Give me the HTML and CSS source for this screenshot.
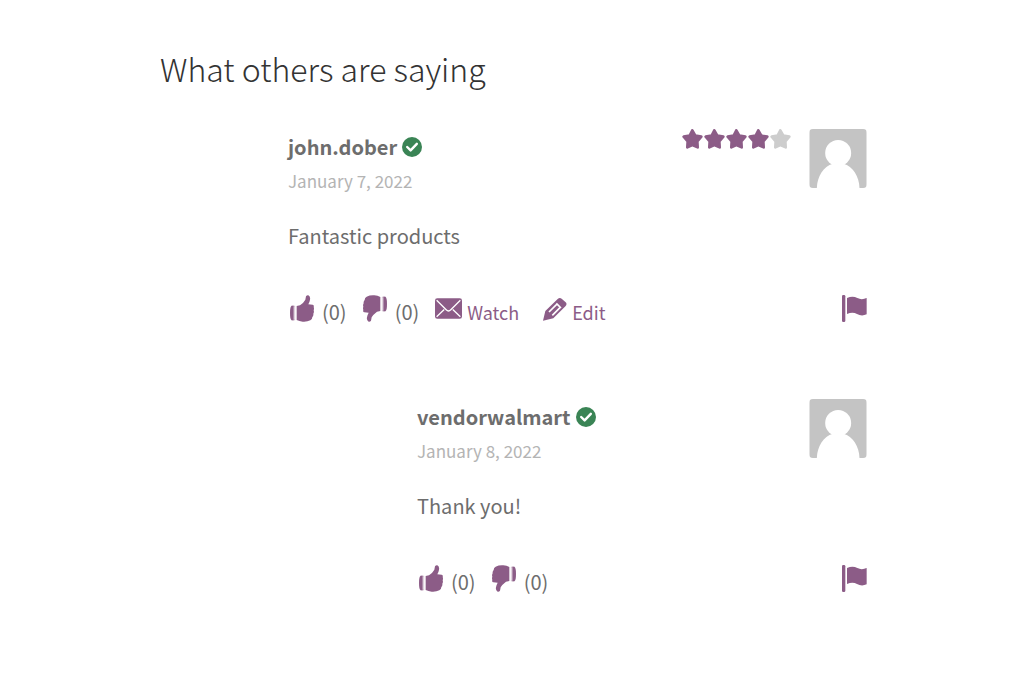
FILE: index.html
```
<!DOCTYPE html>
<html lang="en">
<head>
<meta charset="utf-8">
<meta name="viewport" content="width=device-width, initial-scale=1">
<title>What others are saying</title>
<link rel="stylesheet" href="styles.css">
</head>
<body>
<svg class="sprite" aria-hidden="true">
  <symbol id="thumb" viewBox="0 0 72 81">
    <path d="M5 32H11V76H5Q0 74 0 54T5 32Z"/>
    <path class="line" d="M5 33H14V75H5"/>
    <path d="M20 33L30 31Q42 22 46 14L48 4Q51 0 55 1Q62 5 60 14Q59 21 55 28L68 29Q73 30 71 36Q73 41 71 46Q73 51 70 56Q71 62 67 66Q67 73 61 76Q51 81 38 80Q28 79 20 75Z"/>
  </symbol>
  <symbol id="mail" viewBox="0 0 82 62">
    <rect width="82" height="62" rx="7"/>
    <path class="cut" d="M5 6L34 35Q41 42 48 35L77 6M5 56L28 34M77 56L54 34"/>
  </symbol>
  <symbol id="pencil" viewBox="0 0 72 70">
    <path d="M0 70L7 41L44 5Q50-1 56 4L68 15Q73 20 68 26L31 63Z"/>
    <path class="bars" d="M18 44L41 21M28 54L51 31M40 18L54 32"/>
  </symbol>
  <symbol id="flag" viewBox="0 0 75 81">
    <rect width="10" height="81" rx="4"/>
    <path d="M15 9Q32 1 46 9Q59 16 74 9V58Q59 65 45 57Q32 50 15 57Z"/>
  </symbol>
  <symbol id="star" viewBox="0 0 63 60">
    <path class="body" d="M31 4L40 20L58 23L46 37L47 55L31 48L16 55L17 37L5 23L23 20Z"/>
  </symbol>
  <symbol id="check" viewBox="0 0 58 58">
    <circle cx="29" cy="29" r="29"/>
    <path class="tick" d="M15 29L25 39L43 20"/>
  </symbol>
  <symbol id="person" viewBox="0 0 171 177">
    <rect width="171" height="177" fill="#c4c4c4"/>
    <circle cx="86" cy="72" r="39" fill="#fff"/>
    <path fill="#fff" d="M22 177C23 142 42 112 70 104H102C130 112 149 142 150 177Z"/>
  </symbol>
</svg>
<main class="reviews">
  <h2 class="title">What others are saying</h2>
  <article class="comment">
    <div class="content">
      <h3 class="author">john.dober <svg class="verified" role="img" aria-label="Verified"><use href="#check"/></svg></h3>
      <time class="date" datetime="2022-01-07">January 7, 2022</time>
      <p class="text">Fantastic products</p>
    </div>
    <div class="rating" role="img" aria-label="4 out of 5">
      <svg class="star"><use href="#star"/></svg><svg class="star"><use href="#star"/></svg><svg class="star"><use href="#star"/></svg><svg class="star"><use href="#star"/></svg><svg class="star empty"><use href="#star"/></svg>
    </div>
    <svg class="avatar" role="img" aria-label="john.dober"><use href="#person"/></svg>
    <div class="actions">
      <button class="vote" type="button" aria-label="Like"><svg class="thumb"><use href="#thumb"/></svg><span class="label">(0)</span></button>
      <button class="vote" type="button" aria-label="Dislike"><svg class="thumb down"><use href="#thumb"/></svg><span class="label">(0)</span></button>
      <a class="link" href="#"><svg class="mail"><use href="#mail"/></svg><span class="label">Watch</span></a>
      <a class="link edit" href="#"><svg class="pencil"><use href="#pencil"/></svg><span class="label">Edit</span></a>
      <button class="report" type="button" aria-label="Report"><svg class="flag"><use href="#flag"/></svg></button>
    </div>
  </article>
  <article class="comment reply">
    <div class="content">
      <h3 class="author">vendorwalmart <svg class="verified" role="img" aria-label="Verified"><use href="#check"/></svg></h3>
      <time class="date" datetime="2022-01-08">January 8, 2022</time>
      <p class="text">Thank you!</p>
    </div>
    <svg class="avatar" role="img" aria-label="vendorwalmart"><use href="#person"/></svg>
    <div class="actions">
      <button class="vote" type="button" aria-label="Like"><svg class="thumb"><use href="#thumb"/></svg><span class="label">(0)</span></button>
      <button class="vote" type="button" aria-label="Dislike"><svg class="thumb down"><use href="#thumb"/></svg><span class="label">(0)</span></button>
      <button class="report" type="button" aria-label="Report"><svg class="flag"><use href="#flag"/></svg></button>
    </div>
  </article>
</main>
</body>
</html>
```
FILE: styles.css
```
* { box-sizing: border-box; }
body {
  margin: 0;
  background: #fff;
  color: #6d6d6d;
  font: 20px/28px "Source Sans Pro", "Noto Sans CJK SC", sans-serif;
}
svg { display: block; flex: none; fill: currentColor; }
.sprite { position: absolute; width: 0; height: 0; }
.reviews {
  display: flex;
  flex-direction: column;
  gap: 73px;
  padding: 46px 157px 48px 160px;
}
.title {
  margin: 0 0 -34px;
  color: #333;
  font-size: 32px;
  font-weight: 300;
  line-height: 44px;
}
.comment {
  display: grid;
  grid-template-columns: 1fr auto auto;
  align-items: start;
  margin-left: 128px;
}
.reply { margin-left: 257px; }
.content { grid-column: 1; padding-top: 4px; }
.author {
  display: flex;
  align-items: center;
  gap: 5px;
  margin: 0;
  font-size: 20px;
  font-weight: 700;
}
.verified { width: 20px; height: 20px; color: #3a8455; }
.tick { fill: none; stroke: #fff; stroke-width: 7; stroke-linecap: round; stroke-linejoin: round; }
.date { display: block; margin-top: 6px; color: #b4b4b4; font-size: 17px; }
.text { margin: 27px 0 0; }
.rating { display: flex; gap: 1px; margin-right: 18px; color: #8c5c87; }
.star { width: 21px; height: 20px; }
.body { stroke: currentColor; stroke-width: 8; stroke-linejoin: round; }
.empty { color: #cdcdcd; }
.avatar { grid-column: 3; width: 58px; height: 59px; border-radius: 4px; }
.actions {
  grid-column: 1 / -1;
  display: flex;
  align-items: flex-start;
  gap: 16px;
  margin-top: 45px;
  padding-left: 2px;
  color: #8c5c87;
}
button { padding: 0; border: 0; background: none; color: inherit; font: inherit; cursor: pointer; }
.vote, .link { display: flex; align-items: flex-start; }
.vote { gap: 8px; }
.link { gap: 5px; color: inherit; font-size: 18px; text-decoration: none; }
.edit { margin-left: 8px; }
.label { padding-top: 3px; }
.vote .label { color: #6d6d6d; }
.thumb { width: 24px; height: 27px; }
.down { transform: rotate(180deg); }
.mail { width: 27px; height: 21px; margin-top: 3px; }
.pencil { width: 24px; height: 24px; margin-top: 2px; }
.cut { fill: none; stroke: #fff; stroke-width: 4; }
.bars { fill: none; stroke: #fff; stroke-width: 5; }
.line { fill: none; stroke: currentColor; stroke-width: 1; }
.report { margin-left: auto; }
.flag { width: 25px; height: 27px; }
```
